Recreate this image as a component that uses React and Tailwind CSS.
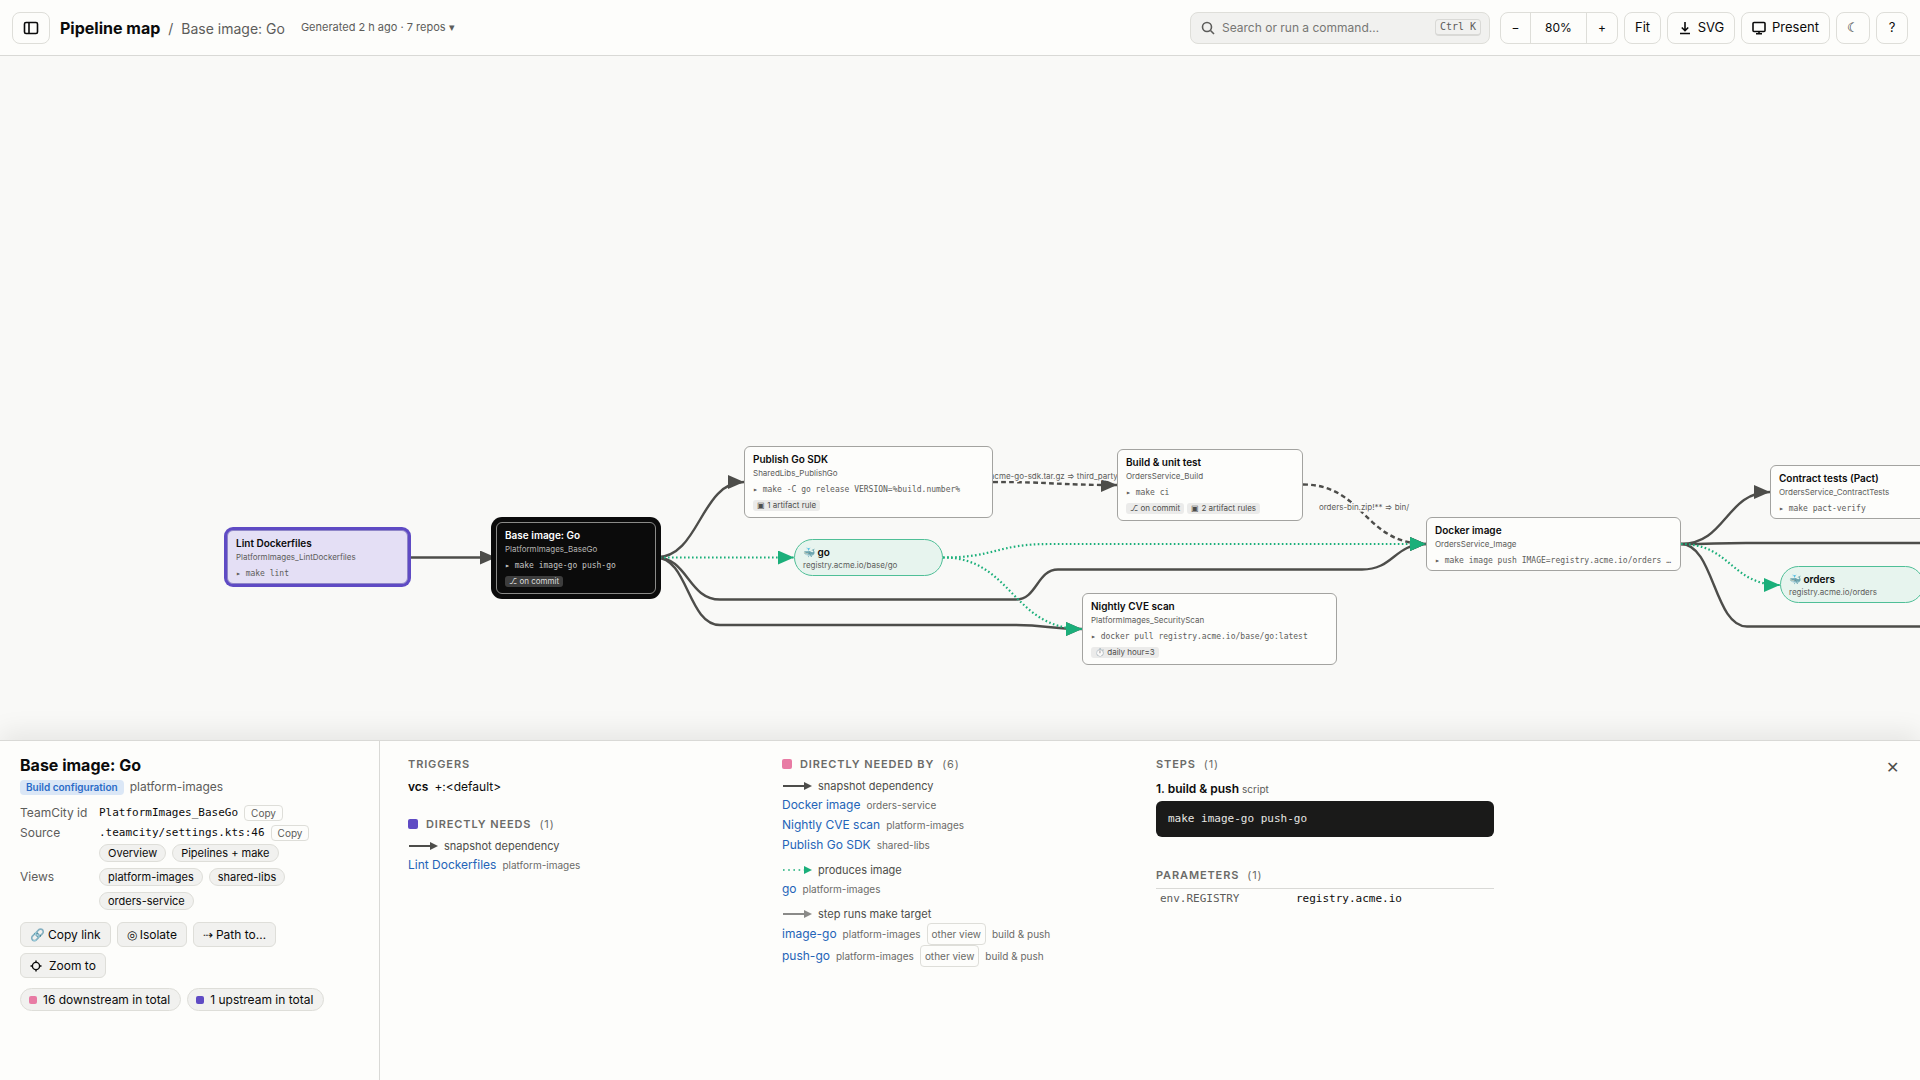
const NODES = [
  { id: 'lint', x: 227, y: 474, w: 181, h: 54, title: 'Lint Dockerfiles', sub: 'PlatformImages_LintDockerfiles', cmd: 'make lint', tone: 'upstream' },
  { id: 'base', x: 496, y: 466, w: 160, h: 72, title: 'Base image: Go', sub: 'PlatformImages_BaseGo', cmd: 'make image-go push-go', tags: ['⎇ on commit'], tone: 'selected' },
  { id: 'sdk', x: 744, y: 390, w: 249, h: 72, title: 'Publish Go SDK', sub: 'SharedLibs_PublishGo', cmd: 'make -C go release VERSION=%build.number%', tags: ['▣ 1 artifact rule'] },
  { id: 'build', x: 1117, y: 393, w: 186, h: 72, title: 'Build & unit test', sub: 'OrdersService_Build', cmd: 'make ci', tags: ['⎇ on commit', '▣ 2 artifact rules'] },
  { id: 'cve', x: 1082, y: 537, w: 255, h: 72, title: 'Nightly CVE scan', sub: 'PlatformImages_SecurityScan', cmd: 'docker pull registry.acme.io/base/go:latest', tags: ['⏱️ daily hour=3'] },
  { id: 'docker', x: 1426, y: 461, w: 255, h: 54, title: 'Docker image', sub: 'OrdersService_Image', cmd: 'make image push IMAGE=registry.acme.io/orders …' },
  { id: 'pact', x: 1770, y: 409, w: 186, h: 54, title: 'Contract tests (Pact)', sub: 'OrdersService_ContractTests', cmd: 'make pact-verify' },
]

const IMAGES = [
  { id: 'go', x: 794, y: 483, w: 149, title: 'go', sub: 'registry.acme.io/base/go' },
  { id: 'orders', x: 1780, y: 510, w: 144, title: 'orders', sub: 'registry.acme.io/orders' },
]

const EDGES = [
  { kind: 'snapshot', d: 'M408 501.5H496' },
  { kind: 'snapshot', d: 'M656 501.5C700 501.5 700 426 744 426' },
  { kind: 'snapshot', d: 'M656 501.5C688 501.5 688 543.5 720 543.5H1016C1037 543.5 1037 513.5 1058 513.5H1362C1394 513.5 1394 488 1426 488' },
  { kind: 'snapshot', d: 'M656 501.5C688 501.5 688 569 720 569H1014C1048 569 1048 573 1082 573' },
  { kind: 'artifact', d: 'M993 426C1055 426 1055 429 1117 429' },
  { kind: 'artifact', d: 'M1303 428.5C1364 428.5 1364 488 1426 488' },
  { kind: 'snapshot', d: 'M1681 488C1726 488 1726 436 1770 436' },
  { kind: 'snapshot', d: 'M1681 488C1714 488 1714 487 1746 487H2000' },
  { kind: 'snapshot', d: 'M1681 488C1714 488 1714 570.5 1747 570.5H2000' },
  { kind: 'image', d: 'M656 501.5H794' },
  { kind: 'image', d: 'M943 501.5C996 501.5 996 488 1050 488H1426' },
  { kind: 'image', d: 'M943 501.5C1012 501.5 1012 573 1082 573' },
  { kind: 'image', d: 'M1681 488C1731 488 1731 529 1780 529' },
]

const EDGE_STYLES = {
  snapshot: { stroke: '#4d4d4a', strokeWidth: 2.4, markerEnd: 'url(#arrow-dark)' },
  artifact: { stroke: '#4d4d4a', strokeWidth: 2.4, strokeDasharray: '4.8 3.2', markerEnd: 'url(#arrow-dark)' },
  image: { stroke: '#1baf7a', strokeWidth: 2.2, strokeDasharray: '1.6 2.4', markerEnd: 'url(#arrow-green)' },
}

const NODE_TONES = {
  default: 'border-[#a3a3a0] bg-[#fdfdfb] text-[#0b0b0b]',
  upstream: 'border-[#8f86c8] bg-[#e4dff5] text-[#0b0b0b] ring-3 ring-[#5f4bc4]',
  selected: 'border-[#8a8a88] bg-[#0b0b0b] text-white ring-5 ring-[#0b0b0b]',
}

function Arrow({ id, color }) {
  return (
    <marker id={id} viewBox="0 0 16 14" refX="16" refY="7" markerWidth="16" markerHeight="14" markerUnits="userSpaceOnUse" orient="auto">
      <path d="M0 0L16 7L0 14Z" fill={color} />
    </marker>
  )
}

function BuildNode({ node }) {
  const tone = node.tone || 'default'
  const selected = tone === 'selected'
  return (
    <div
      className={`absolute rounded-md border px-2 pt-[7px] whitespace-nowrap ${NODE_TONES[tone]}`}
      style={{ left: node.x, top: node.y, width: node.w, height: node.h }}
    >
      <div className="text-[10px] leading-[11px] font-semibold">{node.title}</div>
      <div className={`mt-[3px] text-[8px] leading-[10px] ${selected ? 'text-[#b5b5b3]' : 'text-[#5c5c5a]'}`}>{node.sub}</div>
      <div className={`mt-[6px] font-['DejaVu_Sans_Mono',monospace] text-[8px] leading-[11px] ${selected ? 'text-[#c5c5c3]' : 'text-[#5c5c5a]'}`}>
        ▸ {node.cmd}
      </div>
      {node.tags && (
        <div className="mt-[5px] flex gap-[3px]">
          {node.tags.map((tag) => (
            <span
              key={tag}
              className={`rounded-[3px] px-1 text-[8px] leading-[11px] ${selected ? 'bg-[#3d3d3d] text-[#dededc]' : 'bg-[#ebebea] text-[#4d4d4a]'}`}
            >
              {tag}
            </span>
          ))}
        </div>
      )}
    </div>
  )
}

function ImageNode({ node }) {
  return (
    <div
      className="absolute h-[37px] rounded-full border border-[#4fbf97] bg-[#e7f4ee] px-2 pt-[6px] whitespace-nowrap"
      style={{ left: node.x, top: node.y, width: node.w }}
    >
      <div className="text-[10px] leading-[12px] font-semibold">🐳 {node.title}</div>
      <div className="mt-[2px] text-[8px] leading-[11px] text-[#5c5c5a]">{node.sub}</div>
    </div>
  )
}

function EdgeLabel({ x, y, children }) {
  return (
    <text x={x} y={y} textAnchor="middle" fontSize="8" fill="#5c5c5a" stroke="#f9f9f7" strokeWidth="3" paintOrder="stroke">
      {children}
    </text>
  )
}

function ToolButton({ label, className = '', children }) {
  return (
    <button
      type="button"
      aria-label={label}
      className={`flex h-8 items-center justify-center rounded-lg border border-[#deded9] bg-[#fdfdfb] text-[13px] ${className}`}
    >
      {children}
    </button>
  )
}

function Header() {
  return (
    <header className="flex h-14 shrink-0 items-center border-b border-[#d9d9d6] bg-[#fdfdfb] px-3">
      <ToolButton label="Toggle sidebar" className="w-[38px]">
        <svg className="size-4" viewBox="0 0 16 16" fill="none" stroke="currentColor" strokeWidth="1.6">
          <rect x="1.5" y="2.5" width="13" height="11" rx="1.5" />
          <path d="M6 2.5V13.5" />
        </svg>
      </ToolButton>
      <div className="ml-[10px] flex items-baseline gap-2 text-sm text-[#5c5c5a]">
        <h1 className="text-base font-bold text-[#0b0b0b]">Pipeline map</h1>
        <span>/</span>
        <span>Base image: Go</span>
      </div>
      <button type="button" className="ml-4 text-[11px] text-[#5c5c5a]">Generated 2 h ago · 7 repos ▾</button>

      <div className="ml-auto flex items-center gap-[6px]">
        <label className="mr-1 flex h-8 w-[300px] items-center gap-[7px] rounded-lg border border-[#deded9] bg-[#f1f1ef] pr-2 pl-[10px]">
          <svg className="size-[14px] text-[#5c5c5a]" viewBox="0 0 14 14" fill="none" stroke="currentColor" strokeWidth="1.6">
            <circle cx="6" cy="6" r="4.5" />
            <path d="M9.5 9.5L13 13" />
          </svg>
          <input
            type="text"
            aria-label="Search or run a command"
            placeholder="Search or run a command…"
            className="min-w-0 flex-1 text-xs outline-none placeholder:text-[#777774]"
          />
          <kbd className="rounded border border-b-2 border-[#d9d9d6] px-1 font-['DejaVu_Sans_Mono',monospace] text-[10px] leading-[14px] text-[#5c5c5a]">
            Ctrl K
          </kbd>
        </label>
        <div className="flex h-8 items-stretch divide-x divide-[#deded9] rounded-lg border border-[#deded9] text-xs">
          <button type="button" aria-label="Zoom out" className="w-[30px]">−</button>
          <button type="button" className="w-[56px]">80%</button>
          <button type="button" aria-label="Zoom in" className="w-[30px]">+</button>
        </div>
        <ToolButton className="w-[37px]">Fit</ToolButton>
        <ToolButton className="w-[68px] gap-[6px]">
          <svg className="size-[14px]" viewBox="0 0 14 14" fill="none" stroke="currentColor" strokeWidth="1.6">
            <path d="M7 1V9.5M3.8 6.5L7 9.7L10.2 6.5M2 12.5H12" />
          </svg>
          SVG
        </ToolButton>
        <ToolButton className="w-[89px] gap-[6px]">
          <svg className="size-[14px]" viewBox="0 0 14 14" fill="none" stroke="currentColor" strokeWidth="1.6">
            <rect x="1" y="1.5" width="12" height="9" rx="1" />
            <path d="M7 10.5V12.8M4 12.8H10" />
          </svg>
          Present
        </ToolButton>
        <ToolButton label="Dark theme" className="w-[34px]">☾</ToolButton>
        <ToolButton label="Help" className="w-8">?</ToolButton>
      </div>
    </header>
  )
}

function Graph() {
  return (
    <main className="relative flex-1 overflow-hidden bg-[#f9f9f7]">
      <svg className="absolute inset-0 size-full" fill="none">
        <defs>
          <Arrow id="arrow-dark" color="#4d4d4a" />
          <Arrow id="arrow-green" color="#1baf7a" />
        </defs>
        {EDGES.map((edge) => (
          <path key={edge.d} d={edge.d} {...EDGE_STYLES[edge.kind]} />
        ))}
        <EdgeLabel x="1055" y="423">acme-go-sdk.tar.gz ⇒ third_party/</EdgeLabel>
        <EdgeLabel x="1364" y="454">orders-bin.zip!** ⇒ bin/</EdgeLabel>
      </svg>
      {NODES.map((node) => (
        <BuildNode key={node.id} node={node} />
      ))}
      {IMAGES.map((node) => (
        <ImageNode key={node.id} node={node} />
      ))}
    </main>
  )
}

function CopyButton() {
  return (
    <button type="button" className="ml-[6px] h-4 rounded border border-[#deded9] px-[6px] font-['Inter',sans-serif] text-[10px] leading-[14px] text-[#5c5c5a]">
      Copy
    </button>
  )
}

function ViewChip({ children }) {
  return (
    <button type="button" className="h-[18px] rounded-full border border-[#deded9] bg-[#f1f1ef] px-2 text-[11px] leading-4">
      {children}
    </button>
  )
}

function ActionButton({ icon, children }) {
  return (
    <button type="button" className="flex h-[25px] items-center gap-[3px] rounded-md border border-[#deded9] bg-[#f1f1ef] px-[9px] text-xs">
      <span>{icon}</span>
      <span>{children}</span>
    </button>
  )
}

function TotalChip({ color, children }) {
  return (
    <button type="button" className="flex h-[23px] items-center gap-[6px] rounded-full border border-[#deded9] bg-[#f1f1ef] px-2 pr-[10px] text-xs">
      <span className={`size-2 rounded-xs ${color}`} />
      {children}
    </button>
  )
}

function Summary() {
  return (
    <aside className="w-[380px] shrink-0 border-r border-[#d9d9d6] px-5 pt-[13px]">
      <h2 className="text-base leading-[22px] font-bold">Base image: Go</h2>
      <div className="mt-[2px] flex items-center gap-[6px]">
        <span className="rounded bg-[#dbe7f6] px-[6px] text-[10px] leading-[15px] font-semibold text-[#2a6bc8]">Build configuration</span>
        <span className="text-xs leading-[18px] text-[#5c5c5a]">platform-images</span>
      </div>
      <dl className="mt-[7px] grid grid-cols-[79px_1fr] items-center text-xs leading-5">
        <dt className="text-[#5c5c5a]">TeamCity id</dt>
        <dd className="flex items-center font-['DejaVu_Sans_Mono',monospace] text-[11px]">PlatformImages_BaseGo<CopyButton /></dd>
        <dt className="text-[#5c5c5a]">Source</dt>
        <dd className="flex items-center font-['DejaVu_Sans_Mono',monospace] text-[11px]">.teamcity/settings.kts:46<CopyButton /></dd>
        <dt className="text-[#5c5c5a]">Views</dt>
        <dd className="flex flex-wrap gap-[6px] pt-px pr-10">
          <ViewChip>Overview</ViewChip>
          <ViewChip>Pipelines + make</ViewChip>
          <ViewChip>platform-images</ViewChip>
          <ViewChip>shared-libs</ViewChip>
          <ViewChip>orders-service</ViewChip>
        </dd>
      </dl>
      <div className="mt-3 flex flex-wrap gap-[6px]">
        <ActionButton icon="🔗">Copy link</ActionButton>
        <ActionButton icon="◎">Isolate</ActionButton>
        <ActionButton icon="⇢">Path to…</ActionButton>
        <ActionButton
          icon={
            <svg className="mr-1 size-3" viewBox="0 0 12 12" fill="none" stroke="currentColor" strokeWidth="1.4">
              <circle cx="6" cy="6" r="3.6" />
              <path d="M6 0.5V3M6 9V11.5M0.5 6H3M9 6H11.5" />
            </svg>
          }
        >
          Zoom to
        </ActionButton>
      </div>
      <div className="mt-[10px] flex flex-wrap gap-[6px]">
        <TotalChip color="bg-[#e87ba4]">16 downstream in total</TotalChip>
        <TotalChip color="bg-[#5f4bc4]">1 upstream in total</TotalChip>
      </div>
    </aside>
  )
}

function SectionTitle({ swatch, count, children }) {
  return (
    <h3 className="flex items-center text-[11px] leading-4 font-semibold tracking-[0.08em] text-[#6b6b68] uppercase">
      {swatch && <span className={`mr-2 size-[10px] rounded-xs ${swatch}`} />}
      {children}
      {count && <span className="ml-2 font-normal">({count})</span>}
    </h3>
  )
}

function EdgeKind({ color, dotted, className = '', children }) {
  return (
    <div className={`flex items-center gap-[6px] text-[11px] leading-[18px] text-[#4d4d4a] ${className}`}>
      <svg className="h-2 w-[30px]" viewBox="0 0 30 8">
        <path d="M1 4H23" stroke={color} strokeWidth={dotted ? 1.5 : 2} strokeDasharray={dotted ? '1.6 3.6' : undefined} />
        <path d="M22 0L30 4L22 8Z" fill={color} />
      </svg>
      {children}
    </div>
  )
}

function NodeLink({ repo, otherView, step, children }) {
  return (
    <li className={`flex items-center gap-[6px] text-[10px] text-[#6b6b68] ${otherView ? 'h-[22px]' : 'h-5'}`}>
      <a href="#" className="text-xs text-[#2464b8]">{children}</a>
      <span>{repo}</span>
      {otherView && <span className="rounded border border-[#deded9] px-1 leading-5">other view</span>}
      {step && <span>{step}</span>}
    </li>
  )
}

function Details() {
  return (
    <div className="grid flex-1 grid-cols-4 items-start gap-9 pt-[15px] pr-[52px] pl-7">
      <div>
        <SectionTitle>Triggers</SectionTitle>
        <p className="mt-[5px] text-xs leading-5"><b className="mr-[6px] font-semibold">vcs</b>+:&lt;default&gt;</p>
        <div className="mt-[19px]">
          <SectionTitle swatch="bg-[#5f4bc4]" count="1">Directly needs</SectionTitle>
          <EdgeKind color="#4d4d4a" className="mt-[5px]">snapshot dependency</EdgeKind>
          <ul>
            <NodeLink repo="platform-images">Lint Dockerfiles</NodeLink>
          </ul>
        </div>
      </div>

      <div>
        <SectionTitle swatch="bg-[#e87ba4]" count="6">Directly needed by</SectionTitle>
        <EdgeKind color="#4d4d4a" className="mt-[5px]">snapshot dependency</EdgeKind>
        <ul>
          <NodeLink repo="orders-service">Docker image</NodeLink>
          <NodeLink repo="platform-images">Nightly CVE scan</NodeLink>
          <NodeLink repo="shared-libs">Publish Go SDK</NodeLink>
        </ul>
        <EdgeKind color="#1baf7a" dotted className="mt-[6px]">produces image</EdgeKind>
        <ul>
          <NodeLink repo="platform-images">go</NodeLink>
        </ul>
        <EdgeKind color="#8a8a88" className="mt-[6px]">step runs make target</EdgeKind>
        <ul>
          <NodeLink repo="platform-images" otherView step="build & push">image-go</NodeLink>
          <NodeLink repo="platform-images" otherView step="build & push">push-go</NodeLink>
        </ul>
      </div>

      <div>
        <SectionTitle count="1">Steps</SectionTitle>
        <p className="mt-2 text-xs leading-[18px] font-semibold">
          1. build &amp; push <span className="text-[10px] font-normal text-[#5c5c5a]">script</span>
        </p>
        <pre className="mt-[3px] rounded-md bg-[#1a1a19] px-3 py-[9px] font-['DejaVu_Sans_Mono',monospace] text-[11px] leading-[18px] text-[#e6e6e3]">
          make image-go push-go
        </pre>
        <div className="mt-[30px]">
          <SectionTitle count="1">Parameters</SectionTitle>
          <table className="mt-[5px] w-full border-t border-[#d9d9d6] text-left font-['DejaVu_Sans_Mono',monospace] text-[11px] leading-5">
            <tbody>
              <tr>
                <th scope="row" className="w-[136px] pl-1 font-normal text-[#5c5c5a]">env.REGISTRY</th>
                <td className="pl-1">registry.acme.io</td>
              </tr>
            </tbody>
          </table>
        </div>
      </div>
    </div>
  )
}

export default function App() {
  return (
    <div className="flex min-h-screen flex-col bg-[#f9f9f7] font-['Inter',sans-serif] text-[#0b0b0b]">
      <Header />
      <Graph />
      <section className="relative flex min-h-85 shrink-0 border-t border-[#d9d9d6] bg-[#fdfdfb] shadow-[0_-8px_24px_rgba(0,0,0,0.08)]">
        <Summary />
        <Details />
        <button type="button" aria-label="Close" className="absolute top-4 right-[18px] size-5 text-base leading-5 text-[#4d4d4a]">✕</button>
      </section>
    </div>
  )
}
